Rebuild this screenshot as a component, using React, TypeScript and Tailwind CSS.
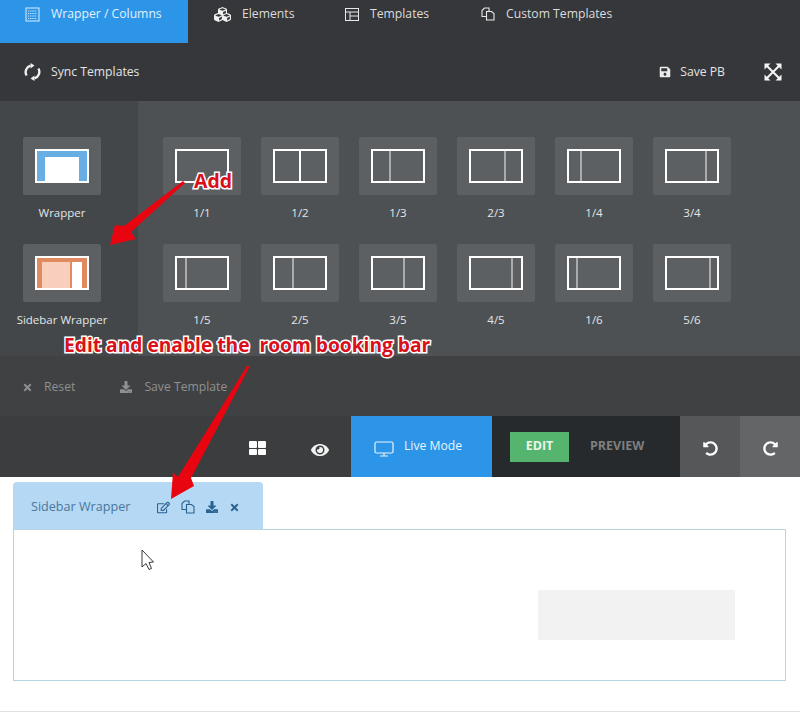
import { FaCubes, FaSave, FaTimes, FaDownload, FaUndoAlt, FaRedoAlt, FaEye, FaRegEdit } from "react-icons/fa";

const sans = "font-['Open_Sans','Noto_Sans',sans-serif]";

function WrapperIcon() {
  return (
    <svg width="15" height="15" viewBox="0 0 15 15" fill="none" stroke="#dceefb" strokeWidth="1">
      <rect x="1" y="1" width="13" height="13" />
      <path d="M3 4h9M3 6.5h9M3 9h9M3 11.5h9" strokeDasharray="1.2 1" />
    </svg>
  );
}
function TemplatesIcon() {
  return (
    <svg width="14" height="13" viewBox="0 0 14 13" fill="none" stroke="#e8e8e8" strokeWidth="1">
      <rect x="0.5" y="0.5" width="13" height="12" />
      <path d="M0.5 4h13M5 4v8.5M5 8h8.5" />
    </svg>
  );
}
function CopyIcon({ color = "#e8e8e8" }: { color?: string }) {
  return (
    <svg width="14" height="14" viewBox="0 0 14 14" fill="none" stroke={color} strokeWidth="1.1">
      <path d="M5 9.5H1V3.5L3.5 1H8V4" />
      <path d="M5.5 4.5H10.5L13 6.5V13H5.5Z" />
    </svg>
  );
}
function SyncIcon() {
  return (
    <svg width="17" height="18" viewBox="0 0 17 18" fill="none" stroke="#f0f0f0" strokeWidth="2.4">
      <path d="M2.6 12.5A6.8 6.8 0 0 1 6.5 2.6" />
      <path d="M14.4 5.5A6.8 6.8 0 0 1 10.5 15.4" />
      <path d="M6.5 0 10.5 2.4 6.5 5.5Z" fill="#f0f0f0" stroke="none" />
      <path d="M10.5 18 6.5 15.6 10.5 12.5Z" fill="#f0f0f0" stroke="none" />
    </svg>
  );
}
function ExpandIcon() {
  return (
    <svg width="18" height="18" viewBox="0 0 18 18" fill="#f5f5f5" stroke="none">
      <path d="M3 3 15 15M15 3 3 15" stroke="#f5f5f5" strokeWidth="2" />
      <path d="M0.5 0.5H6.5L0.5 6.5ZM17.5 0.5V6.5L11.5 0.5ZM0.5 17.5V11.5L6.5 17.5ZM17.5 17.5H11.5L17.5 11.5Z" />
    </svg>
  );
}
function GridIcon() {
  return (
    <div className="grid h-[14px] w-[17px] grid-cols-2 gap-[1px]">
      <div className="rounded-[1px] bg-white" />
      <div className="rounded-[1px] bg-white" />
      <div className="rounded-[1px] bg-white" />
      <div className="rounded-[1px] bg-white" />
    </div>
  );
}
function MonitorIcon() {
  return (
    <svg width="20" height="16" viewBox="0 0 20 16" fill="none" stroke="#e8f4fd" strokeWidth="1.2">
      <rect x="1" y="1" width="18" height="11" rx="1.5" />
      <path d="M6 15h8M10 12v3" />
    </svg>
  );
}

function Tab({ icon, label, active, w }: { icon: React.ReactNode; label: string; active?: boolean; w: string }) {
  return (
    <div className={`flex h-[43px] items-start gap-[11px] pt-[5px] ${w} ${active ? "bg-[#2c95e8] pl-[25px] text-[#e3f1fc]" : "text-[#dcdcdc]"}`}>
      <div className="flex h-[18px] items-center">{icon}</div>
      <span className="leading-[18px]">{label}</span>
    </div>
  );
}

function Col({ label, pad }: { label: string; pad: string }) {
  return (
    <div className="flex w-[78px] flex-col items-center">
      <div className="flex h-[58px] w-[78px] items-center justify-center rounded-[2px] bg-[#5c6062]">
        <div className={`flex h-[34px] w-[54px] border-2 border-white ${pad}`}>
          {pad !== "" && <div className={`h-full ${label === "1/2" ? "w-[1.5px] bg-white" : "w-[2px] bg-[#a9abac]"}`} />}
        </div>
      </div>
      <div className="mt-[10px] text-[11.5px] leading-[16px] text-[#e4e6e6]">{label}</div>
    </div>
  );
}

const row1: [string, string][] = [
  ["1/1", ""], ["1/2", "pl-[24px]"], ["1/3", "pl-[16px]"], ["2/3", "pl-[33px]"], ["1/4", "pl-[11px]"], ["3/4", "pl-[38px]"],
];
const row2: [string, string][] = [
  ["1/5", "pl-[8px]"], ["2/5", "pl-[17px]"], ["3/5", "pl-[30px]"], ["4/5", "pl-[40px]"], ["1/6", "pl-[7px]"], ["5/6", "pl-[42px]"],
];

export default function App() {
  return (
    <div className={`relative h-[717px] w-[800px] overflow-hidden bg-white text-[12.2px] ${sans}`}>
      <div className="flex h-[43px] bg-[#35373a]">
        <Tab w="w-[188px]" active icon={<WrapperIcon />} label="Wrapper / Columns" />
        <Tab w="w-[157px] pl-[26px]" icon={<FaCubes className="text-[17px] text-[#f0f0f0]" />} label="Elements" />
        <Tab w="w-[136px]" icon={<TemplatesIcon />} label="Templates" />
        <Tab w="w-[200px]" icon={<CopyIcon />} label="Custom Templates" />
      </div>
      <div className="flex h-[58px] items-center bg-[#35373a] pl-[24px] pr-[18px] text-[#e4e4e4]">
        <SyncIcon />
        <span className="ml-[10px]">Sync Templates</span>
        <div className="ml-auto flex items-center">
          <FaSave className="text-[12px] text-[#ececec]" />
          <span className="ml-[9px]">Save PB</span>
          <div className="ml-[39px]"><ExpandIcon /></div>
        </div>
      </div>
      <div className="flex h-[255px] bg-[#4d5153] text-[#e4e6e6]">
        <div className="flex w-[138px] flex-col gap-[23px] bg-[#43474a] pl-[23px] pt-[36px]">
          <div className="flex w-[78px] flex-col items-center">
            <div className="flex h-[58px] w-[78px] items-center justify-center rounded-[2px] bg-[#5c6062]">
              <div className="flex h-[34px] w-[54px] items-end justify-center border-2 border-white bg-[#68aee3]">
                <div className="h-[24px] w-[34px] bg-white" />
              </div>
            </div>
            <div className="mt-[10px] text-[11.5px] leading-[16px]">Wrapper</div>
          </div>
          <div className="flex w-[78px] flex-col items-center">
            <div className="flex h-[58px] w-[78px] items-center justify-center rounded-[2px] bg-[#5c6062]">
              <div className="flex h-[34px] w-[54px] items-end gap-[2px] border-2 border-white bg-[#e18a60] px-[5px] pt-[4px]">
                <div className="h-full w-[28px] bg-[#f8cfbc]" />
                <div className="h-full flex-1 bg-white" />
              </div>
            </div>
            <div className="mt-[10px] whitespace-nowrap text-[11.5px] leading-[16px]">Sidebar Wrapper</div>
          </div>
        </div>
        <div className="flex flex-1 flex-col gap-[23px] pl-[25px] pt-[36px]">
          <div className="flex gap-[20px]">
            {row1.map(([l, p]) => <Col key={l} label={l} pad={p} />)}
          </div>
          <div className="flex gap-[20px]">
            {row2.map(([l, p]) => <Col key={l} label={l} pad={p} />)}
          </div>
        </div>
      </div>
      <div className="flex h-[60px] items-center bg-[#404142] pl-[22px] pt-[2px] text-[#8f9091]">
        <FaTimes className="text-[11px]" />
        <span className="ml-[11px]">Reset</span>
        <FaDownload className="ml-[45px] text-[12px]" />
        <span className="ml-[12px]">Save Template</span>
      </div>
      <div className="flex h-[61px] items-center bg-[#3c3d3e]">
        <div className="ml-[249px] mt-[3px]"><GridIcon /></div>
        <FaEye className="ml-[45px] mt-[6px] text-[18px] text-[#f2f2f2]" />
        <div className="ml-[22px] flex h-full w-[141px] items-center gap-[10px] bg-[#2c95e8] pl-[23px] text-[#e8f4fd]">
          <div className="mt-[4px]"><MonitorIcon /></div>
          <span>Live Mode</span>
        </div>
        <div className="flex h-full w-[188px] items-center bg-[#272a2c] pl-[18px] text-[12.5px] font-bold">
          <div className="flex h-[30px] w-[59px] items-center justify-center bg-[#55b56f] text-[#e9f6ec]">EDIT</div>
          <span className="ml-[21px] text-[#7d7f80]">PREVIEW</span>
        </div>
        <div className="flex h-full w-[60px] items-center justify-center bg-[#555759] pt-[4px] text-[15px] text-white"><FaUndoAlt /></div>
        <div className="flex h-full w-[60px] items-center justify-center bg-[#636567] pt-[4px] text-[15px] text-white"><FaRedoAlt /></div>
      </div>
      <div className="px-[13px] pt-[5px]">
        <div className="flex h-[47px] w-[250px] items-center rounded-t-[4px] bg-[#b5d9f5] pl-[18px] pt-[3px] text-[#4a7698]">
          <span className="text-[12.6px]">Sidebar Wrapper</span>
          <div className="ml-[27px] flex items-center gap-[11px] text-[#2a6290]">
            <FaRegEdit className="text-[13px]" />
            <CopyIcon color="#2a6290" />
            <FaDownload className="text-[12px]" />
            <FaTimes className="text-[11px]" />
          </div>
        </div>
        <div className="flex h-[152px] w-[773px] items-start justify-end border border-[#b5d5e0] pr-[50px] pt-[60px]">
          <div className="h-[50px] w-[197px] bg-[#f2f2f2]" />
        </div>
      </div>
      <div className="mt-[30px] h-[1px] bg-[#e0e0e0]" />

      {/* annotations and pointer lying over the page */}
      <svg className="pointer-events-none absolute left-0 top-0" width="800" height="717" viewBox="0 0 800 717">
        <path d="M185 183 131 232 136 239 110 245 115 225 124 226 183 181Z" fill="#e8050f" />
        <path d="M250 366 191 478 194 486 171 499 173 472 178 477 247 366Z" fill="#e8050f" />
        <path d="M142 550V567L146 563.5 149 569.5 151.5 568.5 149 562.5 153.5 562Z" fill="#fff" stroke="#222" strokeWidth="0.9" />
      </svg>
      <div className="absolute left-[194px] top-[169px] text-[19.5px] font-bold leading-[24px] text-[#d9101a] [-webkit-text-stroke:3px_#fff] [paint-order:stroke_fill]">Add</div>
      <div className="absolute left-[64px] top-[333px] whitespace-pre text-[19.2px] font-bold leading-[24px] text-[#d9101a] [-webkit-text-stroke:3px_#fff] [paint-order:stroke_fill]">Edit and enable the  room booking bar</div>
    </div>
  );
}
